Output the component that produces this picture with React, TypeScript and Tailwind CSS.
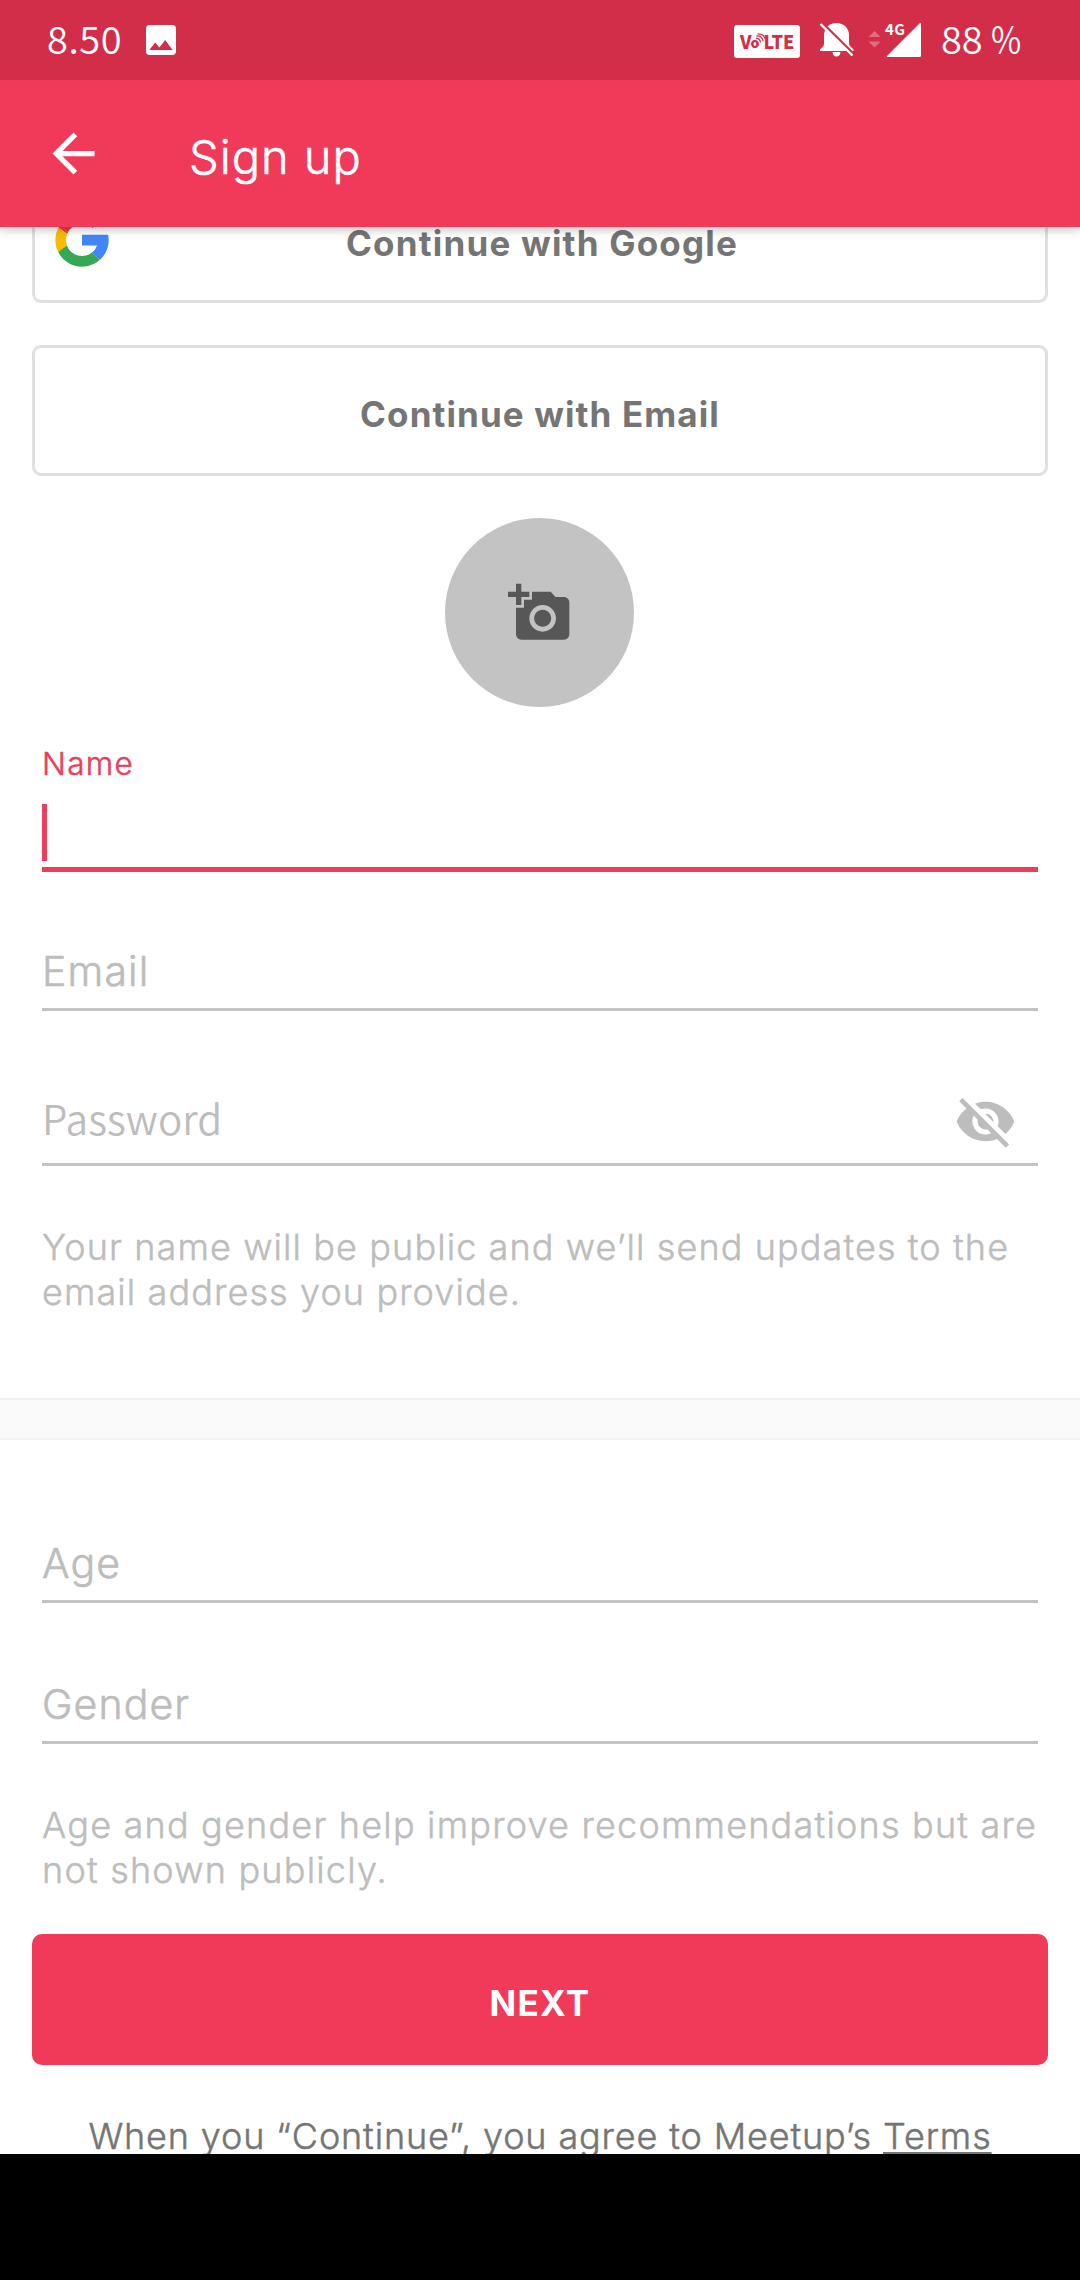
import React from "react";
import { MdAddAPhoto, MdArrowBack, MdImage, MdVisibilityOff } from "react-icons/md";

function GoogleLogo({ className }: { className: string }) {
  return (
    <svg className={className} viewBox="0 0 48 48">
      <path fill="#4285F4" d="M43.611 20.083H24v8h11.303a12.04 12.04 0 0 1-4.087 5.571l6.190 5.238C36.971 39.205 44 34 44 24c0-1.341-.138-2.650-.389-3.917z" />
      <path fill="#EA4335" d="m6.306 14.691 6.571 4.819C14.655 15.108 18.961 12 24 12c3.059 0 5.842 1.154 7.961 3.039l5.657-5.657C34.046 6.053 29.268 4 24 4 16.318 4 9.656 8.337 6.306 14.691z" />
      <path fill="#FBBC05" d="M6.306 14.691A19.900 19.900 0 0 0 4 24c0 3.300.800 6.420 2.216 9.172l6.600-5.000A12 12 0 0 1 12.877 19.510z" />
      <path fill="#34A853" d="M24 44c5.166 0 9.860-1.977 13.409-5.192l-6.190-5.238A11.910 11.910 0 0 1 24 36c-5.202 0-9.619-3.317-11.283-7.946l-6.522 5.025C9.505 39.556 16.227 44 24 44z" />
    </svg>
  );
}

function VolteBadge() {
  return (
    <div className="relative mt-[25px] flex h-[33px] w-[66px] rounded-[3px] bg-white pl-[6px] font-['Noto_Sans_CJK_SC'] font-black text-[#d32e49]">
      <span className="text-[18px] leading-[32px]">V</span>
      <span className="-ml-px mt-[5px] text-[14px] leading-[25px]">o</span>
      <span className="ml-[4px] text-[18px] leading-[32px] tracking-[-0.2px]">LTE</span>
      <svg className="absolute left-[18px] top-[8px]" width="14" height="12" viewBox="0 0 14 12" fill="none" stroke="#d32e49" strokeWidth="1.300">
        <path d="M4 5.500Q8 5 8.500 9.500M4.500 3Q10 2.500 11 8M5.500 .800Q11.500 .500 13 5.500" />
      </svg>
    </div>
  );
}

function BellOff() {
  return (
    <svg className="ml-[19px] mt-[22px]" width="36" height="36" viewBox="0 0 36 36">
      <path fill="#fff" d="M1 27.500 L4.500 24 Q5 23 5 21 V14 C5 6 10 1 17.500 1 C25 1 30 6 30 13 V21 Q30 23 31 24 L34.500 27.500 V29 H1 Z M13.500 30 H21.500 Q21 34.500 17.500 34.500 Q14 34.500 13.500 30 Z" />
      <path d="M2.500 .500 L35.500 33" stroke="#d32e49" strokeWidth="3" />
      <path d="M1.500 2 L33.500 33.500" stroke="#fff" strokeWidth="2.400" />
    </svg>
  );
}

function Signal() {
  return (
    <div className="relative ml-[13px] mt-[22px] h-[36px] w-[54px]">
      <svg width="54" height="36" viewBox="0 0 54 36">
        <path fill="#fff" fillOpacity=".3" d="M0.500 15 L6.500 9 L12.500 15 Z M0.500 19.500 L6.500 25.500 L12.500 19.500 Z" />
        <path fill="#fff" d="M53 2 V33.500 Q53 35 51.500 35 H19.500 Q18 35 19 34 L51.500 1.500 Q53 .500 53 2 Z" />
      </svg>
      <span className="absolute left-[17px] top-0 font-['Noto_Sans_CJK_SC'] text-[15px] font-bold leading-[14px] tracking-[0.5px]">4G</span>
    </div>
  );
}

function StatusBar() {
  return (
    <div className="relative z-20 flex h-[80px] items-start bg-[#d32e49] text-white">
      <span className="ml-[47px] mt-[18px] w-[94px] font-['Noto_Sans_CJK_SC'] text-[38px] font-[350] leading-[40px] tracking-[0.6px]">8.50</span>
      <MdImage className="mt-[20px] size-[40px]" />
      <div className="ml-auto flex items-start">
        <VolteBadge />
        <BellOff />
        <Signal />
        <span className="ml-[19px] mt-[18px] w-[139px] whitespace-pre font-['Noto_Sans_CJK_SC'] text-[38px] font-[350] leading-[40px]">
          88 <span className="inline-block origin-left scale-x-[0.87]">%</span>
        </span>
      </div>
    </div>
  );
}

function Field({ label, className }: { label: string; className: string }) {
  return (
    <div className={`mx-[42px] border-b-[3px] border-[#c3c3c3] pb-[12px] text-[41px] leading-[50px] tracking-[1.1px] text-[#bdbdbd] font-light [-webkit-text-stroke:0.6px] ${className}`}>
      {label}
    </div>
  );
}

export default function App() {
  return (
    <div className="flex h-[2280px] w-[1080px] flex-col overflow-hidden bg-black font-[Inter,sans-serif]">
      <StatusBar />
      <header className="relative z-10 flex h-[147px] items-center bg-[#f13a59] pl-[42px] text-white shadow-[0_2px_10px_rgba(0,0,0,0.28)]">
        <MdArrowBack className="size-[63px]" />
        <h1 className="ml-[84px] pt-[7px] text-[47px] font-light leading-[56px] tracking-[1px] [-webkit-text-stroke:0.6px]">Sign up</h1>
      </header>
      <main className="flex h-[1927px] flex-col overflow-hidden bg-white">
        <button className="relative mx-[32px] -mt-[55px] h-[131px] shrink-0 rounded-[9px] border-[3px] border-[#e0e0e0] pt-[11px] text-[35px] font-bold tracking-[1.2px] text-[#757575]">
          <GoogleLogo className="absolute left-[15px] top-[33px] size-[64px]" />
          <span className="pl-[4px]">Continue with Google</span>
        </button>
        <button className="mx-[32px] mt-[42px] h-[131px] shrink-0 rounded-[9px] border-[3px] border-[#e0e0e0] pt-[8px] text-[35px] font-bold tracking-[1.1px] text-[#757575]">
          Continue with Email
        </button>
        <div className="mr-px mt-[42px] flex h-[189px] w-[189px] shrink-0 items-center justify-center self-center rounded-full bg-[#c3c3c3] text-[#575757]">
          <MdAddAPhoto className="size-[64px]" />
        </div>
        <div className="mx-[42px] mt-[37px] border-b-[5px] border-[#ec3d5b] pb-[6px]">
          <div className="text-[31.5px] font-light leading-[40px] tracking-[1.3px] text-[#e6405d] [-webkit-text-stroke:0.5px]">Name</div>
          <div className="mt-[20px] h-[57px] w-[5px] bg-[#ec3d5b]" />
        </div>
        <Field label="Email" className="mt-[74px]" />
        <div className="mx-[42px] mt-[80px] flex h-[75px] shrink-0 justify-between border-b-[3px] border-[#c3c3c3] pr-[21px] text-[#bdbdbd]">
          <span className="mt-[2px] font-['Noto_Sans_CJK_SC'] text-[40.5px] font-[350] leading-[50px] tracking-[0.1px]">Password</span>
          <MdVisibilityOff className="-mt-px size-[63px]" />
        </div>
        <p className="mx-[42px] mt-[59px] whitespace-nowrap text-[36px] font-light leading-[45px] tracking-[1.1px] text-[#bdbdbd] [-webkit-text-stroke:0.5px]">
          Your name will be public and we’ll send updates to the
          <br />
          email address you provide.
        </p>
        <div className="mt-[83px] h-[42px] shrink-0 border-y-2 border-[#f2f2f2] bg-[#fafafa]" />
        <Field label="Age" className="mt-[98px]" />
        <Field label="Gender" className="mt-[76px]" />
        <p className="mx-[42px] mt-[59px] whitespace-nowrap text-[36px] font-light leading-[45px] tracking-[1.2px] text-[#bdbdbd] [-webkit-text-stroke:0.5px]">
          Age and gender help improve recommendations but are
          <br />
          not shown publicly.
        </p>
        <button className="mx-[32px] mt-[41px] h-[131px] shrink-0 rounded-[10px] bg-[#f13a59] pt-[8px] text-[35px] font-bold tracking-[1.3px] text-white">
          NEXT
        </button>
        <p className="mt-[49px] whitespace-nowrap text-center text-[36px] font-light leading-[45px] tracking-[0.86px] text-[#757575] [-webkit-text-stroke:0.5px]">
          When you “Continue”, you agree to Meetup’s{" "}
          <span className="underline decoration-2 underline-offset-[3px]">Terms</span>
        </p>
      </main>
    </div>
  );
}
